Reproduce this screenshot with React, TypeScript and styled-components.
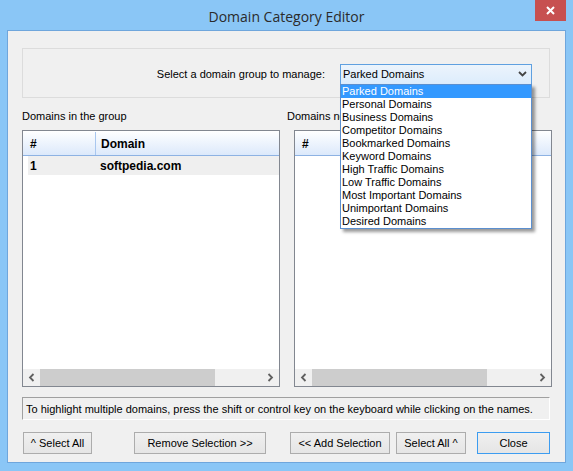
import React from "react";
import styled, { createGlobalStyle } from "styled-components";

const UI = `"Liberation Sans", Arial, sans-serif`;

const Global = createGlobalStyle`
  html, body { margin: 0; padding: 0; }
  body { width: 573px; height: 471px; overflow: hidden; background: #8ac6f6; }
`;

const Window = styled.div`
  width: 573px;
  height: 471px;
  box-sizing: border-box;
  background: #8ac6f6;
  display: flex;
  flex-direction: column;
  font-family: ${UI};
  font-size: 11px;
  color: #000;
`;

const TitleBar = styled.div`
  height: 30px;
  display: grid;
  grid-template-columns: 1fr auto 1fr;
  align-items: start;
`;

const Title = styled.div`
  grid-column: 2;
  font-family: "Open Sans", "Noto Sans", sans-serif;
  font-size: 14px;
  line-height: 33px;
  color: #2b2b2b;
`;

const CloseButton = styled.div`
  grid-column: 3;
  justify-self: end;
  margin-right: 7px;
  width: 31px;
  height: 21px;
  background: #c75050;
  display: flex;
  align-items: center;
  justify-content: center;
`;

const Client = styled.div`
  flex: 1;
  margin: 0 7px 8px 7px;
  border: 1px solid #6fa6dc;
  background: #f0f0f0;
  padding: 17px 15px 0 14px;
  display: flex;
  flex-direction: column;
`;

const GroupBox = styled.div`
  height: 50px;
  box-sizing: border-box;
  border: 1px solid #dcdcdc;
  display: flex;
  align-items: center;
  justify-content: flex-end;
  padding: 2px 17px 0 0;
`;

const FieldLabel = styled.span`
  margin-right: 15px;
  font-size: 11px;
`;

const Combo = styled.div`
  position: relative;
  width: 192px;
  height: 21px;
  box-sizing: border-box;
  border: 1px solid #5fa0e0;
  background: linear-gradient(#ecf4fc, #dcecfc);
  display: flex;
  align-items: center;
  justify-content: space-between;
  padding: 0 4px 0 2px;
  font-size: 11px;
`;

const DropList = styled.div`
  position: absolute;
  top: 100%;
  left: -1px;
  width: 192px;
  box-sizing: border-box;
  border: 1px solid #5b8fcf;
  background: #fff;
  box-shadow: 3px 3px 3px rgba(0, 0, 0, 0.4);
  z-index: 5;
`;

const DropItem = styled.div<{ $active?: boolean }>`
  height: 13px;
  line-height: 13px;
  padding-left: 1px;
  font-size: 11px;
  white-space: nowrap;
  background: ${(p) => (p.$active ? "#3399ff" : "transparent")};
  color: ${(p) => (p.$active ? "#fff" : "#000")};
`;

const Panels = styled.div`
  display: grid;
  grid-template-columns: 258px 258px;
  column-gap: 14px;
`;

const PanelColumn = styled.div`
  display: flex;
  flex-direction: column;
`;

const PanelLabel = styled.div<{ $shift?: number }>`
  height: 32px;
  box-sizing: border-box;
  padding-top: 11px;
  line-height: 14px;
  margin-left: ${(p) => p.$shift ?? 0}px;
  white-space: nowrap;
`;

const ListView = styled.div`
  height: 257px;
  box-sizing: border-box;
  border: 1px solid #828790;
  background: #fff;
  display: flex;
  flex-direction: column;
`;

const Header = styled.div`
  height: 24px;
  box-sizing: border-box;
  margin-top: 1px;
  border-bottom: 1px solid #8db2e3;
  background: linear-gradient(#fdfeff, #dce9fb);
  display: grid;
  grid-template-columns: 72px 1fr;
  align-items: center;
  font-weight: bold;
  font-size: 12px;
`;

const HeadCell = styled.div<{ $sep?: boolean }>`
  height: 100%;
  display: flex;
  align-items: center;
  padding-left: ${(p) => (p.$sep ? 5 : 7)}px;
  border-left: ${(p) => (p.$sep ? "1px solid #a9c7ef" : "none")};
  box-sizing: border-box;
`;

const Row = styled.div`
  height: 19px;
  margin-left: 5px;
  background: #efefef;
  display: grid;
  grid-template-columns: 67px 1fr;
  align-items: center;
  font-weight: bold;
  font-size: 12px;
`;

const RowCell = styled.div<{ $first?: boolean }>`
  padding-left: ${(p) => (p.$first ? 2 : 5)}px;
`;

const ListBody = styled.div`
  flex: 1;
`;

const HScroll = styled.div`
  height: 17px;
  background: #f0f0f0;
  display: grid;
  grid-template-columns: 17px 1fr 17px;
`;

const ArrowBox = styled.div`
  display: flex;
  align-items: center;
  justify-content: center;
`;

const Track = styled.div`
  display: flex;
  align-items: stretch;
`;

const Thumb = styled.div`
  width: 175px;
  background: #cdcdcd;
`;

const InfoBox = styled.div`
  margin-top: 10px;
  height: 23px;
  box-sizing: border-box;
  border-top: 1px solid #a0a0a0;
  border-left: 1px solid #a0a0a0;
  border-bottom: 1px solid #fff;
  border-right: 1px solid #fff;
  display: flex;
  align-items: center;
  padding-left: 3px;
  white-space: nowrap;
`;

const ButtonRow = styled.div`
  margin-top: 12px;
  display: flex;
`;

const Button = styled.div<{ $w: number; $ml: number; $default?: boolean }>`
  width: ${(p) => p.$w}px;
  margin-left: ${(p) => p.$ml}px;
  height: 22px;
  box-sizing: border-box;
  border: 1px solid ${(p) => (p.$default ? "#3c9cf0" : "#acacac")};
  background: linear-gradient(#f0f0f0, #e5e5e5);
  display: flex;
  align-items: center;
  justify-content: center;
  white-space: nowrap;
  font-size: 11px;
`;

const Chevron = ({ dir }: { dir: "left" | "right" }) => (
  <svg width="7" height="9" viewBox="0 0 7 9">
    <path
      d={dir === "left" ? "M5.5 1 L2 4.5 L5.5 8" : "M1.5 1 L5 4.5 L1.5 8"}
      fill="none"
      stroke="#606060"
      strokeWidth="1.8"
    />
  </svg>
);

const ScrollBar = () => (
  <HScroll>
    <ArrowBox>
      <Chevron dir="left" />
    </ArrowBox>
    <Track>
      <Thumb />
    </Track>
    <ArrowBox>
      <Chevron dir="right" />
    </ArrowBox>
  </HScroll>
);

const groups = [
  "Parked Domains",
  "Personal Domains",
  "Business Domains",
  "Competitor Domains",
  "Bookmarked Domains",
  "Keyword Domains",
  "High Traffic Domains",
  "Low Traffic Domains",
  "Most Important Domains",
  "Unimportant Domains",
  "Desired Domains",
];

export default function App() {
  return (
    <Window>
      <Global />
      <TitleBar>
        <Title>Domain Category Editor</Title>
        <CloseButton>
          <svg width="9" height="9" viewBox="0 0 9 9">
            <path d="M1 1 L8 8 M8 1 L1 8" stroke="#fff" strokeWidth="2" />
          </svg>
        </CloseButton>
      </TitleBar>
      <Client>
        <GroupBox>
          <FieldLabel>Select a domain group to manage:</FieldLabel>
          <Combo>
            <span>Parked Domains</span>
            <svg width="9" height="6" viewBox="0 0 9 6">
              <path d="M1 1 L4.5 4.5 L8 1" fill="none" stroke="#444" strokeWidth="1.8" />
            </svg>
            <DropList>
              {groups.map((g, i) => (
                <DropItem key={g} $active={i === 0}>
                  {g}
                </DropItem>
              ))}
            </DropList>
          </Combo>
        </GroupBox>
        <Panels>
          <PanelColumn>
            <PanelLabel>Domains in the group</PanelLabel>
            <ListView>
              <Header>
                <HeadCell>#</HeadCell>
                <HeadCell $sep>Domain</HeadCell>
              </Header>
              <ListBody>
                <Row>
                  <RowCell $first>1</RowCell>
                  <RowCell>softpedia.com</RowCell>
                </Row>
              </ListBody>
              <ScrollBar />
            </ListView>
          </PanelColumn>
          <PanelColumn>
            <PanelLabel $shift={-7}>Domains not in the group</PanelLabel>
            <ListView>
              <Header>
                <HeadCell>#</HeadCell>
                <HeadCell $sep>Domain</HeadCell>
              </Header>
              <ListBody />
              <ScrollBar />
            </ListView>
          </PanelColumn>
        </Panels>
        <InfoBox>
          To highlight multiple domains, press the shift or control key on the keyboard while clicking on the names.
        </InfoBox>
        <ButtonRow>
          <Button $w={69} $ml={1}>^ Select All</Button>
          <Button $w={132} $ml={42}>Remove Selection &gt;&gt;</Button>
          <Button $w={100} $ml={24}>&lt;&lt; Add Selection</Button>
          <Button $w={70} $ml={6}>Select All ^</Button>
          <Button $w={73} $ml={11} $default>Close</Button>
        </ButtonRow>
      </Client>
    </Window>
  );
}
